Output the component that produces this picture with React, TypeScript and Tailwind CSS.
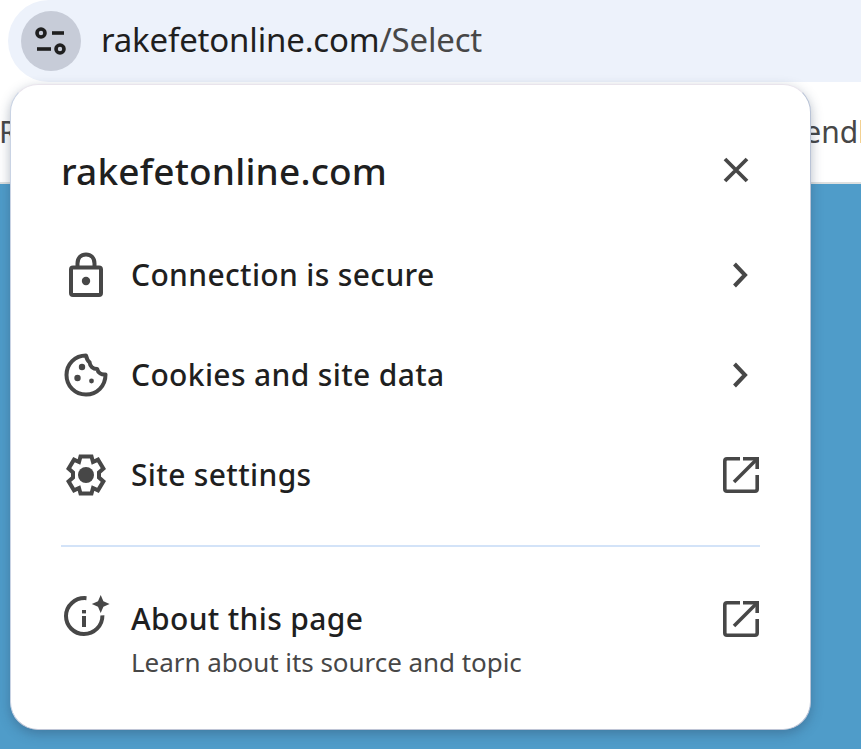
const font = { fontFamily: '"Noto Sans", "Open Sans", sans-serif' };

function Ext() {
  return (
    <svg width="36" height="36" viewBox="0 0 36 36" fill="none" stroke="#474747" strokeWidth="3.6" className="ml-[2px]">
      <path d="M17 1.8H4Q1.8 1.8 1.8 4V32Q1.8 34.2 4 34.2H32Q34.2 34.2 34.2 32V18" />
      <path d="M20 1.8H34.2V12" />
      <path d="M34 2L11 25" />
    </svg>
  );
}

function Chevron() {
  return (
    <svg width="18" height="26" viewBox="0 0 18 26" fill="none" stroke="#474747" strokeWidth="4">
      <path d="M3.5 2L14 13L3.5 24" />
    </svg>
  );
}

function Lock() {
  return (
    <svg width="36" height="46" viewBox="0 0 36 46" fill="none">
      <path d="M9.5 16V11.5C9.5 6 13 2.4 18 2.4C23 2.4 26.5 6 26.5 11.5V16" stroke="#474747" strokeWidth="4" />
      <rect x="3" y="15.6" width="30" height="27.4" rx="2" stroke="#474747" strokeWidth="4" />
      <circle cx="18" cy="29" r="4.2" fill="#474747" />
    </svg>
  );
}

function Cookie() {
  return (
    <svg width="44" height="44" viewBox="0 0 44 44" fill="none">
      <path d="M22 2.5C11 2.5 2.5 11 2.5 22C2.5 33 11 41.5 22 41.5C33 41.5 41.5 33 41.5 21.5C37.5 22 34 19.8 33.2 16C29 16 26 13.6 25.6 9.4C23.6 7.8 22.6 5.2 22 2.5Z" stroke="#474747" strokeWidth="4" strokeLinejoin="round" />
      <circle cx="18" cy="14" r="3.2" fill="#474747" />
      <circle cx="13.5" cy="25" r="3.2" fill="#474747" />
      <circle cx="27.5" cy="28" r="2.4" fill="#474747" />
    </svg>
  );
}

function Gear() {
  return (
    <svg width="40" height="42" viewBox="0 0 40 42" fill="none">
      <path d="M14.5 2.4H25.5L27 8L32 5.6L37.4 14.6L33 18.4V23.6L37.4 27.4L32 36.4L27 34L25.5 39.6H14.5L13 34L8 36.4L2.6 27.4L7 23.6V18.4L2.6 14.6L8 5.6L13 8Z" stroke="#474747" strokeWidth="4" strokeLinejoin="miter" />
      <circle cx="20" cy="21" r="8" fill="#474747" />
    </svg>
  );
}

function AboutIcon() {
  return (
    <svg width="46" height="44" viewBox="0 0 46 44" fill="none" className="overflow-visible -mt-[3px]">
      <path d="M23.5 2.2C11.8 1.2 3 10 3 20C3 30 11 38 21 38C31 38 39.6 30 39.4 19.4" stroke="#474747" strokeWidth="4" />
      <rect x="19" y="20" width="4" height="11" fill="#474747" />
      <rect x="19" y="14" width="4" height="3.4" fill="#474747" />
      <path d="M37.7 -1L40.4 5.3L46.6 8L40.4 10.7L37.7 17L35 10.7L28.8 8L35 5.3Z" fill="#474747" />
    </svg>
  );
}

function Row({ icon, label, sub, right }: { icon: React.ReactNode; label: string; sub?: string; right: React.ReactNode }) {
  return (
    <div className="flex items-start">
      <div className="w-[70px] h-[46px] shrink-0 flex items-center">
        <div className="w-[50px] flex justify-center">{icon}</div>
      </div>
      <div className="flex-1">
        <div className="text-[30px] leading-[46px] text-[#1f1f1f] font-medium tracking-[0.35px]">{label}</div>
        {sub && <div className="text-[26px] leading-[34px] mt-[3px] text-[#474747] tracking-[-0.05px]">{sub}</div>}
      </div>
      <div className="w-[40px] h-[46px] flex items-center justify-center shrink-0">{right}</div>
    </div>
  );
}

export default function App() {
  return (
    <div className="relative w-[861px] h-[749px] overflow-hidden flex flex-col bg-[#4f9cc9]" style={font}>
      <div className="bg-white pl-2 shrink-0">
        <div className="h-[82px] bg-[#edf2fb] rounded-l-[41px] flex items-center pl-[13px]">
          <div className="w-[60px] h-[60px] rounded-full bg-[#c7ccd8] flex items-center justify-center">
            <svg width="34" height="30" viewBox="0 0 34 30" fill="none" stroke="#1f1f1f" strokeWidth="3.6">
              <circle cx="7" cy="7" r="4" />
              <path d="M18 7H30" />
              <path d="M3 23H17" />
              <circle cx="26" cy="23" r="4" />
            </svg>
          </div>
          <div className="ml-5 -mt-1 text-[33px] leading-none text-[#1f1f1f] tracking-[-0.18px]">
            rakefetonline.com<span className="text-[#474747]">/Select</span>
          </div>
        </div>
      </div>
      <div className="h-[102px] shrink-0 bg-white border-b-2 border-[#dde0e0] flex items-center justify-between text-[30px] text-[#474747]">
        <span className="-ml-[1px] -mt-[2px]">R</span>
        <span className="-mr-[5px] -mt-[2px]">endl</span>
      </div>
      <div className="flex-1" />
      <div className="absolute left-[10px] top-[84px] w-[801px] h-[646px] bg-white rounded-[28px] border border-[#e9e4ec] border-b-[#bfc5d6] border-l-[#c9d3e4] border-r-[#b9c3d6] shadow-[0_4px_12px_rgba(40,60,90,0.35)] pl-[50px] pr-[50px] flex flex-col">
        <div className="flex items-center justify-between mt-[58px] h-[54px]">
          <div className="text-[37px] leading-none text-[#1f1f1f] font-medium tracking-[0.2px]">rakefetonline.com</div>
          <svg width="26" height="26" viewBox="0 0 26 26" stroke="#474747" strokeWidth="3.8" className="mr-[11px] -mt-[1px]">
            <path d="M2 2L24 24M24 2L2 24" />
          </svg>
        </div>
        <div className="mt-[55px] flex flex-col gap-[54px]">
          <Row icon={<Lock />} label="Connection is secure" right={<Chevron />} />
          <Row icon={<Cookie />} label="Cookies and site data" right={<Chevron />} />
          <Row icon={<Gear />} label="Site settings" right={<Ext />} />
        </div>
        <div className="h-[2px] bg-[#d3e3f8] mt-[47px]" />
        <div className="mt-[49px]">
          <Row icon={<AboutIcon />} label="About this page" sub="Learn about its source and topic" right={<Ext />} />
        </div>
      </div>
    </div>
  );
}
